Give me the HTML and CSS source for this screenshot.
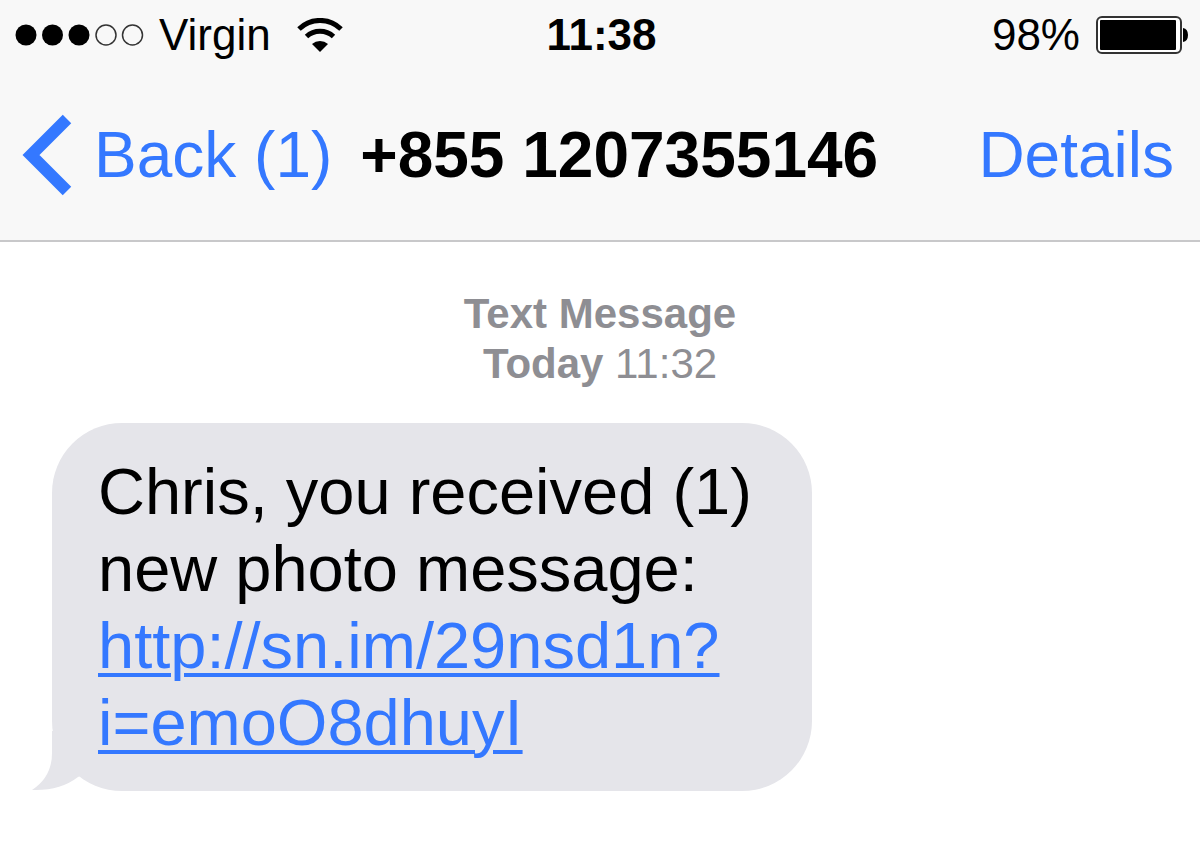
FILE: index.html
```html
<!DOCTYPE html>
<html lang="en">
<head>
<meta charset="utf-8">
<meta name="viewport" content="width=device-width, initial-scale=1">
<title>Messages</title>
<link rel="stylesheet" href="styles.css">
</head>
<body>
<header class="top">
  <div class="status">
    <div class="carrier">
      <svg class="signal" viewBox="0 0 130 24" role="img" aria-label="Signal: 3 of 5">
        <circle cx="11" cy="12" r="10.500"/><circle cx="37.500" cy="12" r="10.500"/><circle cx="64" cy="12" r="10.500"/>
        <g fill="none" stroke="#333" stroke-width="1.500"><circle cx="91" cy="12" r="10"/><circle cx="117.500" cy="12" r="10"/></g>
      </svg>
      <span>Virgin</span>
      <svg class="wifi" viewBox="0 0 46 34" aria-hidden="true">
        <g fill="none" stroke="#000" stroke-width="5"><path d="M2 11A30 30 0 0 1 44 11"/><path d="M9.500 18.500A20 20 0 0 1 36.500 18.500"/></g>
        <path d="M15 26A12 12 0 0 1 31 26L23 34Z"/>
      </svg>
    </div>
    <time class="clock">11:38</time>
    <div class="power">
      <span>98%</span>
      <svg class="battery" viewBox="0 0 92 38" aria-hidden="true">
        <rect x="1" y="1" width="84" height="36" rx="5" fill="#fff" stroke="#333" stroke-width="2"/>
        <rect x="4" y="4" width="76" height="30" rx="1"/><path d="M87 12Q92 13 92 19T87 26Z"/>
      </svg>
    </div>
  </div>
  <nav class="nav">
    <button class="back" type="button">
      <svg class="chevron" viewBox="0 0 50 82" aria-hidden="true"><path d="M45 5L9 41L45 77" fill="none" stroke="#3478ff" stroke-width="12"/></svg>
      <span>Back (1)</span>
    </button>
    <h1 class="title">+855 1207355146</h1>
    <button class="details" type="button">Details</button>
  </nav>
</header>
<main class="thread">
  <p class="stamp"><b>Text Message</b><br><b>Today</b> 11:32</p>
  <div class="bubble">
    <p class="message">Chris, you received (1)<br>new photo message:<br><a href="#">http://sn.im/29nsd1n?<br>i=emoO8dhuyI</a></p>
    <svg class="tail" viewBox="0 0 60 60" aria-hidden="true"><path d="M20 0V22Q20 46 0 59Q28 60 46 46L60 40V0Z" fill="#e5e5ea"/></svg>
  </div>
</main>
</body>
</html>
```
FILE: styles.css
```css
* { box-sizing: border-box; }
body { margin: 0; background: #fff; color: #000; font-family: "Liberation Sans", Arial, sans-serif; }
.top { background: #f8f8f8; border-bottom: 2px solid #c8c8ca; }
.status { display: grid; grid-template-columns: 1fr auto 1fr; align-items: center; height: 70px; padding: 0 12px 0 15px; font-size: 44px; }
.carrier, .power { display: flex; align-items: center; }
.carrier { gap: 14px; }
.power { justify-content: flex-end; gap: 16px; }
.signal { width: 130px; height: 24px; }
.wifi { width: 46px; height: 34px; margin-left: 12px; }
.clock { font-weight: bold; }
.battery { width: 92px; height: 38px; }
.nav { display: flex; align-items: center; height: 170px; padding: 0 26px 0 22px; }
.back, .details { padding: 0; border: 0; background: none; color: #3478ff; font: 64px/72px "Liberation Sans", Arial, sans-serif; white-space: nowrap; }
.back { display: flex; align-items: center; gap: 22px; }
.chevron { width: 50px; height: 82px; }
.title { margin: 0 0 0 28px; font-size: 64px; line-height: 72px; white-space: nowrap; }
.details { margin-left: auto; }
.thread { padding: 47px 52px; }
.stamp { margin: 0; text-align: center; color: #8e8e93; font-size: 42px; line-height: 50px; }
.bubble { position: relative; width: fit-content; margin-top: 34px; padding: 30px 60px 30px 46px; border-radius: 70px; background: #e5e5ea; }
.message { margin: 0; font-size: 65px; line-height: 77px; }
.message a { color: #3478ff; text-decoration-thickness: 4px; text-underline-offset: 5px; }
.tail { position: absolute; left: -20px; bottom: 0; width: 60px; height: 60px; }
```
